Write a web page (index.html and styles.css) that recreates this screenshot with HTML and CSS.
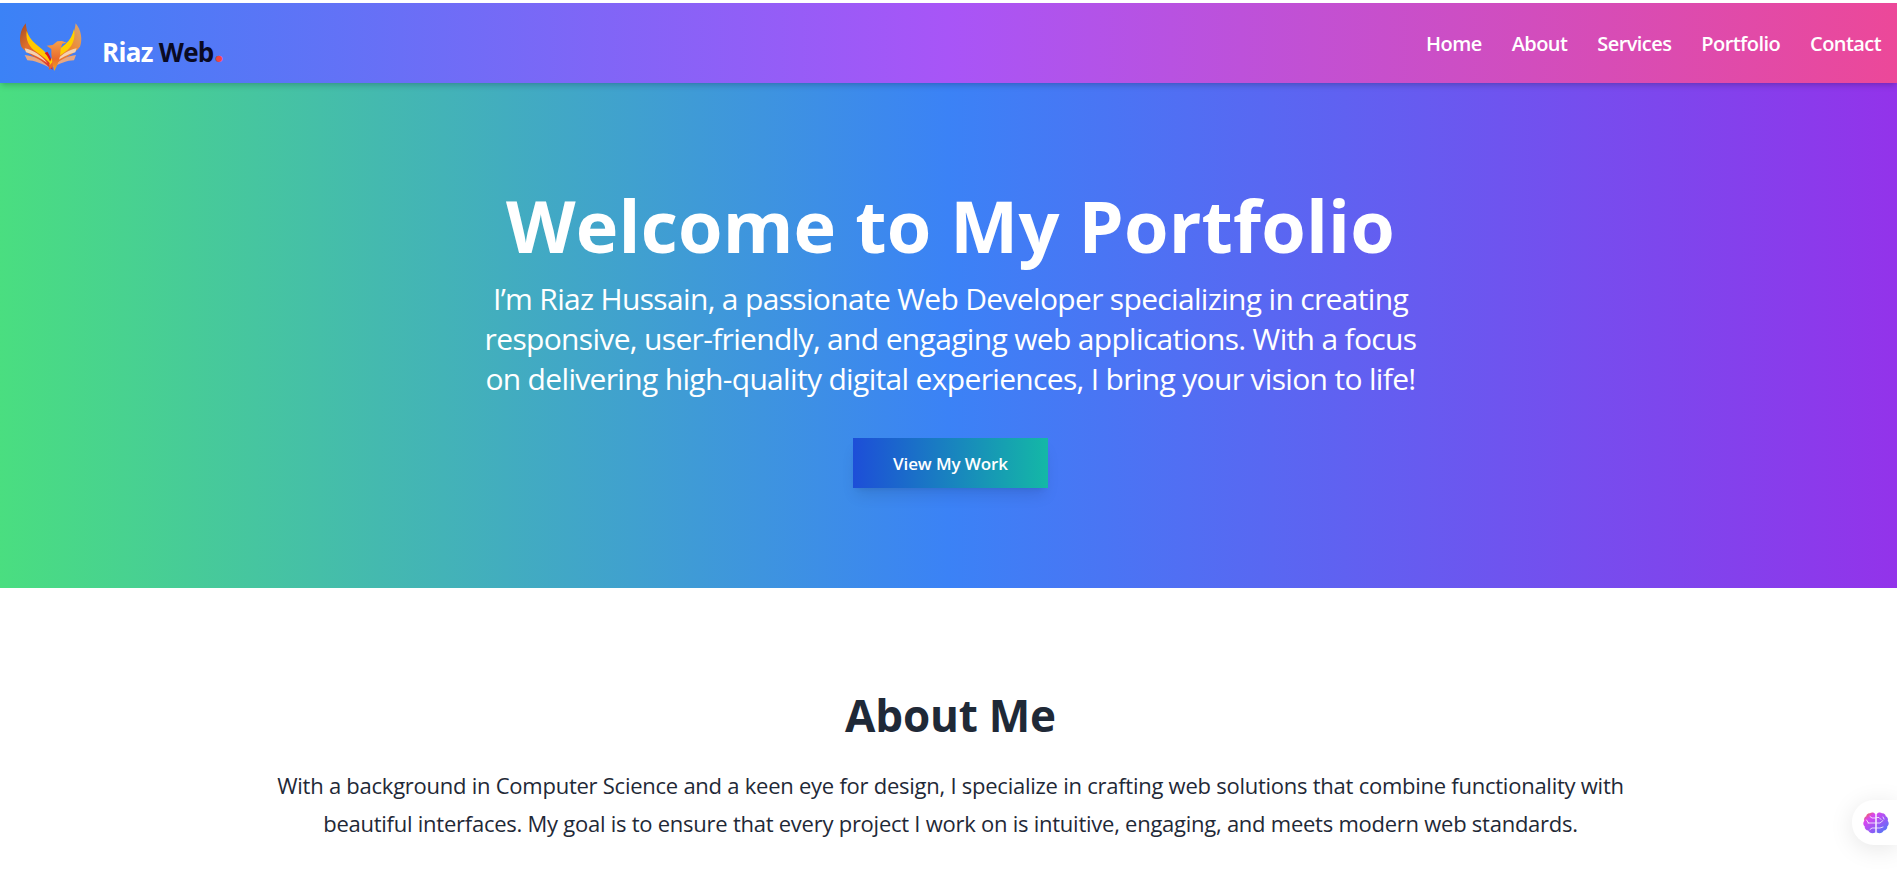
FILE: index.html
```html
<!DOCTYPE html>
<html lang="en">
<head>
<meta charset="utf-8">
<title>Riaz Web</title>
<link rel="stylesheet" href="styles.css">
</head>
<body>
<header class="topbar">
  <a class="brand" href="#">
    <svg class="brand-logo" viewBox="0 0 240 195" aria-hidden="true">
      <defs>
        <linearGradient id="wingL" x1="0" y1="0" x2="1" y2="1">
          <stop offset="0" stop-color="#a34a26"/>
          <stop offset="0.35" stop-color="#e0702a"/>
          <stop offset="0.75" stop-color="#e8502a"/>
          <stop offset="1" stop-color="#d6222e"/>
        </linearGradient>
        <linearGradient id="wingR" x1="0" y1="0" x2="1" y2="1">
          <stop offset="0" stop-color="#d8a878"/>
          <stop offset="0.4" stop-color="#ee8a32"/>
          <stop offset="1" stop-color="#e8602a"/>
        </linearGradient>
        <linearGradient id="birdBody" x1="0" y1="0" x2="0" y2="1">
          <stop offset="0" stop-color="#f6a04a"/>
          <stop offset="0.6" stop-color="#ea6a2c"/>
          <stop offset="1" stop-color="#f2a81c"/>
        </linearGradient>
      </defs>
      <g>
        <path d="M47 25C30 45 26 75 34 95C50 118 95 135 128 165C126 130 95 105 72 88C58 72 50 50 47 25z" fill="url(#wingL)"/>
        <path d="M50 48C46 75 58 97 80 112C100 126 114 137 126 152C124 125 100 105 78 88C64 76 55 62 50 48z" fill="#ffc800"/>
        <path d="M104 114C114 124 122 140 128 162C127 135 120 122 112 110z" fill="#d9141f"/>
        <path d="M44 100C70 104 96 124 112 144C92 130 70 118 48 112z" fill="#f4d2b0"/>
        <path d="M44 120C70 122 98 136 118 158C96 146 72 136 52 136z" fill="#e8a880"/>
      </g>
      <g transform="translate(244) scale(-1 1)">
        <path d="M47 25C30 45 26 75 34 95C50 118 95 135 128 165C126 130 95 105 72 88C58 72 50 50 47 25z" fill="url(#wingR)"/>
        <path d="M52 42C46 72 58 97 80 112C100 126 114 137 126 152C124 125 100 105 78 88C64 76 56 60 52 42z" fill="#ffd000"/>
        <path d="M44 100C70 104 96 124 112 144C92 130 70 118 48 112z" fill="#f4d2b0"/>
        <path d="M46 120C70 122 98 136 118 158C96 146 72 136 52 136z" fill="#e8a880"/>
      </g>
      <path d="M110 92L128 90L142 79L156 78L170 83L157 86L152 100C152 125 144 150 133 168C126 145 123 120 124 102z" fill="url(#birdBody)"/>
    </svg>
    <span class="brand-name"><span class="brand-first">Riaz</span> <span class="brand-second">Web</span><span class="brand-dot">.</span></span>
  </a>
  <nav class="menu">
    <a href="#">Home</a>
    <a href="#">About</a>
    <a href="#">Services</a>
    <a href="#">Portfolio</a>
    <a href="#">Contact</a>
  </nav>
</header>

<section class="hero">
  <h1>Welcome to My Portfolio</h1>
  <p class="hero-text">I’m Riaz Hussain, a passionate Web Developer specializing in creating responsive, user-friendly, and engaging web applications. With a focus on delivering high-quality digital experiences, I bring your vision to life!</p>
  <a class="cta" href="#">View My Work</a>
</section>

<section class="about">
  <h2>About Me</h2>
  <p>With a background in Computer Science and a keen eye for design, I specialize in crafting web solutions that combine functionality with beautiful interfaces. My goal is to ensure that every project I work on is intuitive, engaging, and meets modern web standards.</p>
</section>

<button class="side-widget" type="button" aria-label="Assistant">
  <svg viewBox="0 0 26 22" width="26" height="22" aria-hidden="true">
    <defs>
      <linearGradient id="brain" x1="0" y1="0" x2="1" y2="1">
        <stop offset="0" stop-color="#f97316"/>
        <stop offset="0.25" stop-color="#d946ef"/>
        <stop offset="0.65" stop-color="#8b5cf6"/>
        <stop offset="1" stop-color="#3b82f6"/>
      </linearGradient>
    </defs>
    <path fill="url(#brain)" d="M12.300 2.200C11.500.500 8.500 0 7 1.300 5 1 3.300 2.500 3.300 4.300 1.500 5 .6 7 1.300 8.800-.2 10.500 0 13 1.700 14.300 1.500 16.500 3 18.300 5.200 18.500 6.300 20.800 9 22 12.300 20.500zM13.700 2.200C14.500.500 17.500 0 19 1.300 21 1 22.700 2.500 22.700 4.300 24.500 5 25.400 7 24.700 8.800 26.200 10.500 26 13 24.300 14.300 24.500 16.500 23 18.300 20.800 18.500 19.700 20.800 17 22 13.700 20.500z"/>
    <path d="M12.300 6H9L7 4.500M12.300 11H5M12.300 16H9l-2 1.500M3.500 8l2 3M13.700 5.500H16l2 2M13.700 11H17l3-2.500M13.700 16H17l3-1M20 5l1 2" fill="none" stroke="#fff" stroke-width=".9" stroke-linecap="round" stroke-linejoin="round" opacity=".85"/>
  </svg>
</button>
</body>
</html>
```
FILE: styles.css
```css
* {
  box-sizing: border-box;
}

html,
body {
  height: 100%;
  overflow: hidden;
}

body {
  margin: 0;
  padding-top: 3px;
  background: #fff;
  color: #1f2937;
  font-family: "Open Sans", "Noto Sans", sans-serif;
}

a {
  text-decoration: none;
}

.topbar {
  position: relative;
  z-index: 2;
  display: flex;
  align-items: center;
  justify-content: space-between;
  height: 80px;
  padding: 0 16px 0 10px;
  background: linear-gradient(to right, #3b82f6, #a855f7, #ec4899);
  box-shadow: 0 4px 6px -1px rgba(0, 0, 0, .15), 0 2px 4px -2px rgba(0, 0, 0, .1);
}

.brand {
  display: flex;
  align-items: center;
  gap: 12px;
}

.brand-logo {
  width: 80px;
  height: 65px;
  margin-top: 9px;
}

.brand-name {
  margin-top: 18px;
  font-size: 26px;
  font-weight: 700;
  line-height: 32px;
  letter-spacing: -.7px;
}

.brand-first {
  color: #fff;
}

.brand-second {
  color: #0a0a23;
}

.brand-dot {
  color: #ef4444;
  font-size: 38px;
  line-height: 0;
}

.menu {
  display: flex;
  gap: 30px;
}

.menu a {
  color: #fff;
  font-size: 20px;
  font-weight: 600;
  letter-spacing: -.57px;
}

.hero {
  display: flex;
  flex-direction: column;
  align-items: center;
  height: 505px;
  padding: 106px 0 0 4px;
  background: linear-gradient(to right, #4ade80, #3b82f6, #9333ea);
  color: #fff;
  text-align: center;
}

.hero h1 {
  margin: 0;
  font-size: 72px;
  font-weight: 700;
  line-height: 72px;
  letter-spacing: .2px;
}

.hero-text {
  width: 950px;
  margin: 18px 0 0;
  font-size: 30px;
  line-height: 40px;
  letter-spacing: -.67px;
}

.cta {
  display: flex;
  align-items: center;
  justify-content: center;
  width: 195px;
  height: 50px;
  margin-top: 39px;
  background: linear-gradient(to right, #1d4ed8, #14b8a6);
  box-shadow: 0 10px 15px -3px rgba(0, 0, 0, .1), 0 4px 6px -4px rgba(0, 0, 0, .1);
  color: #fff;
  font-size: 17px;
  font-weight: 600;
  letter-spacing: -.1px;
}

.about {
  padding: 97px 0 0 4px;
  text-align: center;
}

.about h2 {
  margin: 0;
  color: #1f2937;
  font-size: 44px;
  font-weight: 700;
  line-height: 60px;
  letter-spacing: -.2px;
}

.about p {
  width: 1380px;
  margin: 22px auto 0;
  font-size: 22px;
  line-height: 37.500px;
  letter-spacing: -.25px;
}

.side-widget {
  position: fixed;
  top: 800px;
  right: 0;
  z-index: 3;
  display: flex;
  align-items: center;
  width: 45px;
  height: 45px;
  padding: 0 0 0 11px;
  border: 0;
  border-radius: 22px 0 0 22px;
  background: #fff;
  box-shadow: 0 4px 24px rgba(0, 0, 0, .1);
}
```
